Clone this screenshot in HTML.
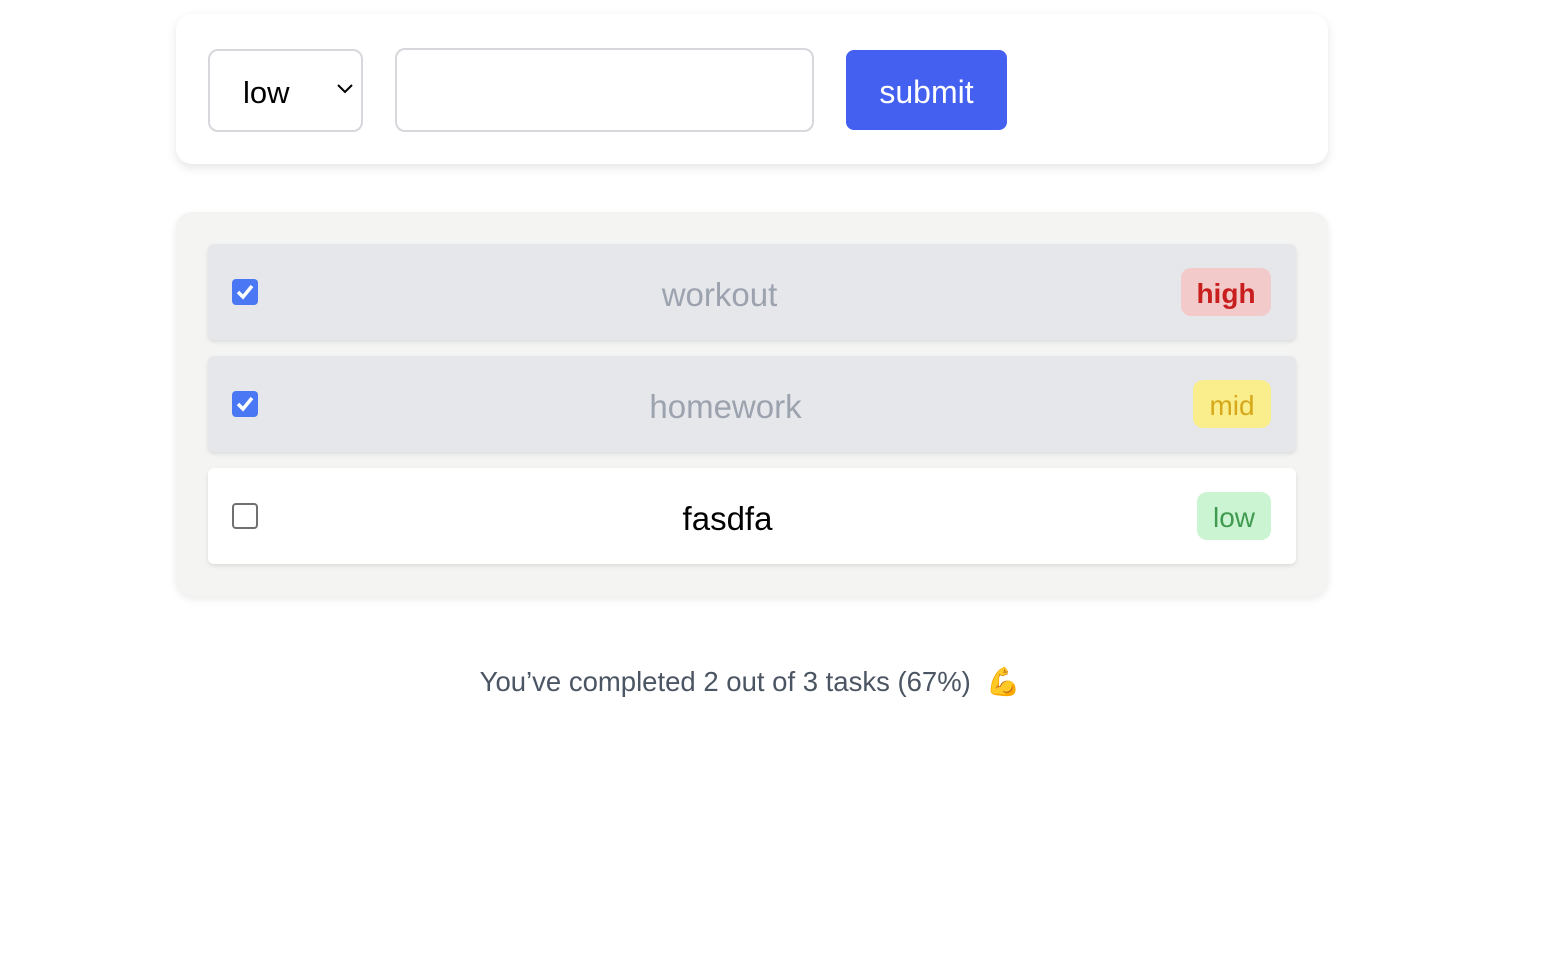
<!DOCTYPE html>
<html><head><meta charset="utf-8"><style>
*{box-sizing:border-box;margin:0;padding:0}
body{width:1568px;height:970px;background:#fff;font-family:"Liberation Sans",sans-serif;position:relative;overflow:hidden}
.abs{position:absolute}
.card1{left:176px;top:14px;width:1152px;height:150px;background:#fff;border-radius:16px;box-shadow:0 4px 10px rgba(0,0,0,.1)}
.sel{left:208px;top:49px;width:155px;height:83px;border:2px solid #d6d8dc;border-radius:10px;font-size:31px;padding:24px 0 0 33px;color:#000}
.inp{left:395px;top:48px;width:419px;height:84px;border:2px solid #d6d8dc;border-radius:10px}
.btn{left:846px;top:50px;width:161px;height:80px;background:#4460f1;border-radius:8px;color:#fff;font-size:32px;text-align:center;line-height:84px}
.card2{left:176px;top:212px;width:1152px;height:384px;background:#f4f4f3;border-radius:16px;box-shadow:0 3px 8px rgba(0,0,0,.08)}
.row{left:208px;width:1088px;height:96px;border-radius:6px;box-shadow:0 2px 4px rgba(0,0,0,.1)}
.row .t{position:absolute;left:50px;top:0;line-height:102px;text-align:center;font-size:33px}
.cb{position:absolute;left:24px;top:35px;width:26px;height:26px;border-radius:4px}
.badge{position:absolute;top:24px;height:48px;border-radius:10px;font-size:28px;line-height:52px;text-align:center}
.foot{left:0;width:1500px;top:665px;text-align:center;font-size:27.5px;color:#4b5563}
</style></head><body>
<div class="abs card1"></div>
<div class="abs sel">low<svg style="position:absolute;left:126px;top:32px" width="18" height="12" viewBox="0 0 18 12"><path d="M2 2l7 7 7-7" stroke="#000" stroke-width="2" fill="none"/></svg></div>
<div class="abs inp"></div>
<div class="abs btn">submit</div>
<div class="abs card2"></div>
<div class="abs row" style="top:244px;background:#e5e7ea"><div class="cb" style="background:#4a78f5"><svg width="26" height="26" viewBox="0 0 26 26"><path d="M6 13l5 5 9-11" stroke="#fff" stroke-width="3.5" fill="none"/></svg></div><div class="t" style="color:#9ca3af;width:923px">workout</div><div class="badge" style="left:973px;width:90px;background:#f3caca;color:#c81e1e;font-weight:bold">high</div></div>
<div class="abs row" style="top:356px;background:#e5e7ea"><div class="cb" style="background:#4a78f5"><svg width="26" height="26" viewBox="0 0 26 26"><path d="M6 13l5 5 9-11" stroke="#fff" stroke-width="3.5" fill="none"/></svg></div><div class="t" style="color:#9ca3af;width:935px">homework</div><div class="badge" style="left:985px;width:78px;background:#f9ed8c;color:#d6a81a">mid</div></div>
<div class="abs row" style="top:468px;background:#fff"><div class="cb" style="border:2px solid #707070"></div><div class="t" style="color:#000;width:939px">fasdfa</div><div class="badge" style="left:989px;width:74px;background:#cbf4d3;color:#3f9a4f">low</div></div>
<div class="abs foot">You’ve completed 2 out of 3 tasks (67%) &nbsp;<span style="font-family:'Noto Color Emoji',sans-serif;color:#e8b23a">💪</span></div>
</body></html>
